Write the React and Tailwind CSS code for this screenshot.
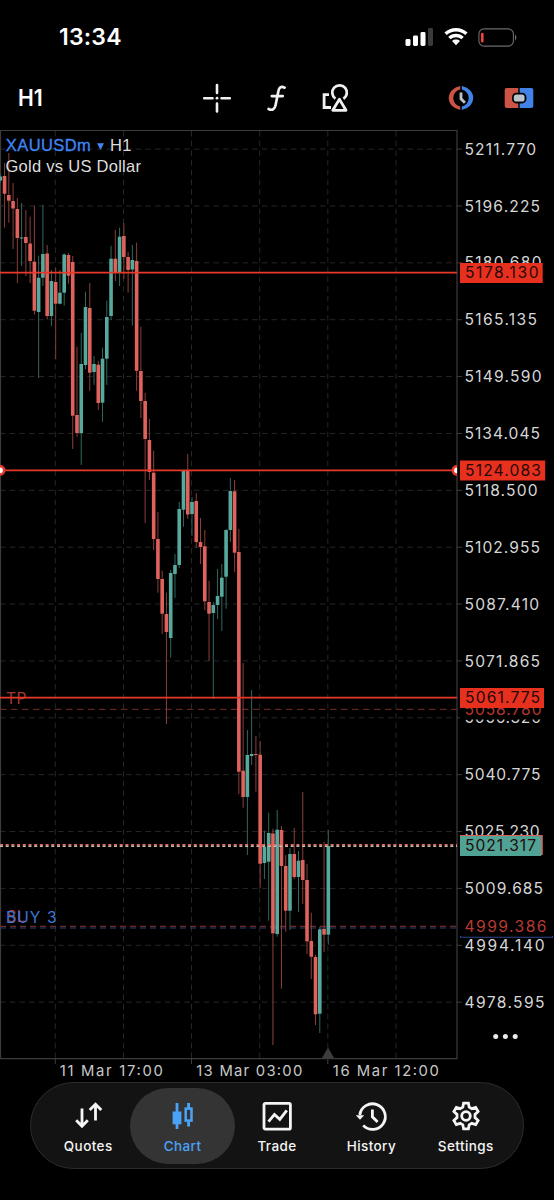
import React from 'react';

// [top, bottom, high, low, direction] in chart pixels
const CANDLES = [
  [176.5, 180.5, 174, 183, 'u'], [176, 193.7, 163, 227.7, 'd'], [195, 200.7, 153, 222.7, 'd'],
  [201, 208.5, 183, 249, 'd'], [209, 238, 198, 283, 'd'], [237.5, 238.5, 203, 266, 'u'],
  [237, 243, 210, 276, 'd'], [243.5, 261, 216.7, 283, 'd'], [261.7, 310.7, 205.5, 314.7, 'd'],
  [277.7, 312, 255.7, 378, 'u'], [254, 277.7, 205, 286, 'u'], [253.5, 316, 245, 319.5, 'd'],
  [281, 316, 270, 326, 'u'], [282, 303.7, 268, 359, 'd'], [292.7, 303.7, 270, 304.5, 'u'],
  [254.5, 292.7, 253.5, 305.6, 'u'], [255, 275.7, 253, 283.7, 'd'], [262, 415.7, 256, 449, 'd'],
  [415, 433, 346.7, 436.7, 'd'], [364, 433, 333, 465, 'u'], [307, 365, 291.7, 369, 'u'],
  [308, 372.7, 283, 390.7, 'd'], [364, 372, 356, 384.7, 'u'], [364.7, 403, 360.7, 410, 'd'],
  [358.7, 402.7, 347.7, 421.7, 'u'], [317, 358.7, 300.7, 385, 'u'], [258.7, 316, 245.7, 320, 'u'],
  [258.7, 272, 230, 281, 'd'], [236.7, 272, 227.7, 286, 'u'], [236, 257, 223, 279, 'd'],
  [257, 270, 251.7, 292.7, 'd'], [260, 269.5, 245, 325.7, 'u'], [261, 370.8, 242.5, 390.7, 'd'],
  [371, 401, 326.7, 418, 'd'], [401, 439, 393, 523, 'd'], [440, 472, 419, 480, 'd'],
  [472.7, 539, 450.7, 550, 'd'], [539, 579, 512, 592.7, 'd'], [579, 613.7, 570.7, 634, 'd'],
  [614, 632, 592.7, 724, 'd'], [573, 638, 570, 657.7, 'u'], [565, 574, 554, 598, 'u'],
  [509, 565, 502, 568, 'u'], [470.7, 509.7, 470, 526.7, 'u'], [470.7, 514.5, 454, 519, 'd'],
  [502, 514, 497, 536, 'u'], [501, 542, 493, 547.7, 'd'], [542, 547, 518, 564, 'd'],
  [546.3, 601.3, 530, 610, 'd'], [602, 613.7, 580.7, 661, 'd'], [605, 613, 602, 699, 'u'],
  [596, 605, 569, 619, 'u'], [577.7, 596.7, 564, 631, 'u'], [530, 576.7, 529, 608.7, 'u'],
  [491, 530, 478, 542, 'u'], [491.3, 552.7, 480, 572, 'd'], [552, 771.7, 529, 794, 'd'],
  [770.7, 797, 663, 807.7, 'd'], [755, 797, 730, 855, 'u'], [754, 756, 690, 765, 'u'],
  [754, 755, 736, 791.7, 'd'], [754.7, 863.7, 741, 888, 'd'], [847, 863, 830.5, 879, 'u'],
  [833, 861.7, 812.7, 920.7, 'u'], [833.5, 933.3, 828.7, 1045, 'd'], [829.7, 934, 810, 936.7, 'u'],
  [830, 866, 826, 988.7, 'd'], [866, 910.7, 855, 931.7, 'd'], [854, 910.7, 848, 930, 'u'],
  [854, 877, 828, 879, 'd'], [860.7, 877, 851, 912, 'u'], [860, 880, 792, 904, 'd'],
  [880, 941.3, 864, 954, 'd'], [941, 956.7, 912.7, 979, 'd'], [957, 1014.3, 954.7, 1025, 'd'],
  [929.3, 1013.7, 926.7, 1033, 'u'], [929, 934.7, 842, 952, 'd'], [846, 934.7, 830, 944.7, 'u'],
];

const PRICES = [
  ['5211.770', 71.5], ['5196.225', 75.5], ['5180.680', 77], ['5165.135', 72.5],
  ['5149.590', 77], ['5134.045', 75.5], ['5118.500', 73], ['5102.955', 75.5],
  ['5087.410', 74.5], ['5071.865', 75.5], ['5056.320', 76.5], ['5040.775', 76],
  ['5025.230', 75], ['5009.685', 78.5], ['4994.140', 80], ['4978.595', 80],
];

const DATES = [
  ['11 Mar 17:00', 60, 103], ['13 Mar 03:00', 196.5, 106], ['16 Mar 12:00', 333, 106],
];

const GRID_X = [55.3, 123.5, 191.5, 259.7, 327.8, 396];
const gridY = (i) => 149.1 + i * 56.87;

const Label = ({ x, y, w, children, size = 15.6, fill = '#d6d6d6' }) => (
  <text x={x} y={y} fontSize={size} fill={fill} textLength={w} lengthAdjust="spacing">{children}</text>
);

const Tag = ({ y, w, textW, fill, children }) => (
  <g>
    <rect x="460" y={y} width={w} height="20" fill={fill} />
    <Label x={465} y={y + 15.4} w={textW} fill="#250a07">{children}</Label>
  </g>
);

const StatusBar = () => (
  <div className="flex h-[72px] items-center pr-[37px] pl-[59px] pt-[2px]">
    <span className="pt-[1px] text-[23px] leading-none font-semibold tracking-[0.2px]">13:34</span>
    <div className="ml-auto flex items-center gap-[10px]">
      <svg width="29" height="18" viewBox="0 0 29 18">
        <rect x="0.5" y="11" width="5" height="7" rx="1.4" fill="#fff" />
        <rect x="8" y="7.5" width="5" height="10.5" rx="1.4" fill="#fff" />
        <rect x="15.5" y="4" width="5" height="14" rx="1.4" fill="#fff" />
        <rect x="23" y="0" width="5" height="18" rx="1.4" fill="#3a3a3a" />
      </svg>
      <svg width="24" height="18" viewBox="0 0 24 18" fill="#fff">
        <path d="M12 0C16.5 0 20.6 1.7 23.6 4.6L21.2 7.1C18.8 4.8 15.6 3.5 12 3.5S5.2 4.8 2.8 7.1L.4 4.6C3.4 1.7 7.5 0 12 0Z" />
        <path d="M12 5.8C15 5.8 17.7 6.9 19.8 8.9L17.3 11.3C15.9 10 14 9.2 12 9.2S8.1 10 6.7 11.3L4.2 8.9C6.3 6.9 9 5.8 12 5.8Z" />
        <path d="M12 11.5C13.5 11.5 14.8 12 15.9 12.9L12 17.2 8.1 12.9C9.2 12 10.5 11.5 12 11.5Z" />
      </svg>
      <svg width="39" height="19" viewBox="0 0 39 19">
        <rect x="0.9" y="0.9" width="34.5" height="17.2" rx="5.2" fill="none" stroke="#6b6b6b" strokeWidth="1.1" />
        <rect x="3" y="4.7" width="2.6" height="9.8" rx="1.2" fill="#f0443e" />
        <path d="M37 6.5C38.8 7.5 38.8 11.5 37 12.5Z" fill="#6b6b6b" />
      </svg>
    </div>
  </div>
);

const Toolbar = () => (
  <div className="flex h-[52px] items-center pr-[20px] pl-[18px]">
    <span className="w-[184px] text-[23px] leading-none font-semibold">
      <span className="inline-block origin-left scale-x-[0.92]">H1</span>
    </span>
    <svg width="30" height="30" viewBox="0 0 30 30" stroke="#f0f0f0" strokeWidth="2.6" strokeLinecap="round">
      <path d="M15 2V10M15 20.5V28.5M2.2 15.2H10.5M19.5 15.2H27.8" />
      <path d="M15 15.2h.01" strokeWidth="2.8" />
    </svg>
    <svg className="ml-[35px]" width="20" height="28" viewBox="0 0 20 28" fill="none" stroke="#f0f0f0" strokeWidth="2.7" strokeLinecap="round">
      <path d="M17.6 3.7C14 1.8 12 3.6 11.4 7L8.6 21C7.9 24.6 5.6 27 1.6 25M4.8 12.1H15.8" />
    </svg>
    <svg className="ml-[34px]" width="30" height="30" viewBox="0 0 30 30" fill="none" stroke="#f0f0f0" strokeWidth="2.8">
      <path d="M8 11.6H3.1V24.5H10" />
      <path d="M14.4 15.6A7.3 7.3 0 1 1 22.4 15.8" />
      <path d="M18.4 16.3L25 27.3H11.8Z" strokeLinejoin="round" />
    </svg>
    <svg className="ml-auto" width="30" height="26" viewBox="0 0 30 26">
      <path d="M14.2 1A14 12.2 0 0 0 14.2 25V21.6A8.8 8.8 0 0 1 14.2 4.4Z" fill="#cb5447" />
      <path d="M15.8 1A14 12.2 0 0 1 15.8 25V21.6A8.8 8.8 0 0 0 15.8 4.4Z" fill="#4281e6" />
      <path d="M15 7.4V13.8L18.9 17.7" fill="none" stroke="#b9c5cb" strokeWidth="2.8" />
    </svg>
    <svg className="ml-[28px]" width="30" height="22" viewBox="0 0 30 22">
      <path d="M2.7 1H14.3V21H2.7A2 2 0 0 1 .7 19V3A2 2 0 0 1 2.7 1Z" fill="#cb5447" />
      <path d="M15.7 1H27.3A2 2 0 0 1 29.3 3V19A2 2 0 0 1 27.3 21H15.7Z" fill="#4281e6" />
      <rect x="8.9" y="6.7" width="12.6" height="8.8" rx="3.5" fill="#b9c5cb" stroke="#000" strokeWidth="1.8" />
    </svg>
  </div>
);

const Chart = () => (
  <svg className="block" width="554" height="958" viewBox="0 124 554 958">
    {/* grid */}
    <g stroke="#262626" strokeWidth="1" strokeDasharray="5.5 4.2">
      {PRICES.map(([p], i) => <path key={p} d={`M0 ${gridY(i)}H457`} />)}
      {GRID_X.map((x) => <path key={x} d={`M${x} 131V1058`} />)}
    </g>
    <path d="M457 130.5H.5V1058.7H457Z" fill="none" stroke="#3c3c3c" strokeWidth="1.2" />
    <g stroke="#3c3c3c" strokeWidth="1">
      {PRICES.map(([p], i) => <path key={p} d={`M457 ${gridY(i)}H462`} />)}
      {[55.3, 191.5, 327.8].map((x) => <path key={x} d={`M${x} 1059V1064`} />)}
    </g>

    {/* pending and open position levels */}
    <path d="M0 709.3H457" stroke="#7a2e28" strokeDasharray="6.5 4.5" />
    <path d="M0 926.4H457" stroke="#6e2a2c" strokeWidth="1.2" strokeDasharray="6 4" />
    <path d="M0 928H457" stroke="#2c3f6d" strokeWidth="1.2" strokeDasharray="6 4" />
    <Label x={6} y={704} w={20.5} size={15.5} fill="#a53a30">TP</Label>
    <Label x={6.5} y={921.5} w={19} size={15.5} fill="#b2392f">SL</Label>
    <Label x={6} y={923} w={50.5} size={15.5} fill="#3c78dc">BUY 3</Label>

    {/* candles */}
    {CANDLES.map(([top, bottom, high, low, dir], i) => {
      const x = 0.3 + i * 4.26;
      const up = dir === 'u';
      return (
        <g key={i}>
          <rect x={x - 0.5} y={high} width="1" height={low - high} fill={up ? '#31675f' : '#8b3f3b'} />
          <rect x={x - 1.8} y={top} width="3.6" height={bottom - top} fill={up ? '#57a99d' : '#e0625c'} />
        </g>
      );
    })}

    <path d="M0 844.9H457" stroke="#dc6a66" strokeWidth="1.6" strokeDasharray="3 2.7" />
    <path d="M0 846.2H457" stroke="#c9b9ab" strokeWidth="1.4" strokeDasharray="3 2.7" />
    <path d="M0 272.6H457M0 470.3H457M0 697.6H457" stroke="#e8382a" strokeWidth="1.7" />
    <path d="M0 464.8A5.5 5.5 0 0 1 0 475.8ZM457 464.8A5.5 5.5 0 0 0 457 475.8Z" fill="#e8382a" />
    <path d="M0 467.4A2.9 2.9 0 0 1 0 473.2ZM457 467.4A2.9 2.9 0 0 0 457 473.2Z" fill="#fff" />
    <path d="M328 1047.5L334.7 1059H321.3Z" fill="#3c3c3c" />

    {/* symbol caption */}
    <g fontFamily="'Liberation Sans', sans-serif">
      <g stroke="#3f86f5" strokeWidth="0.3">
        <Label x={5.8} y={151} w={85} size={16.5} fill="#3f86f5">XAUUSDm</Label>
      </g>
      <path d="M97 143.2H104L100.5 150Z" fill="#3f86f5" />
      <Label x={110} y={151} w={21.5} size={16.5} fill="#dedede">H1</Label>
      <Label x={5.5} y={171.8} w={135.5} size={16.5} fill="#dedede">Gold vs US Dollar</Label>
    </g>

    {/* price axis */}
    {PRICES.map(([p, w], i) => <Label key={p} x={464.5} y={gridY(i) + 5.6} w={w}>{p}</Label>)}
    <rect x="460" y="700" width="84" height="19.5" fill="#000" />
    <Label x={464.5} y={714.8} w={77} fill="#b5362c">5058.780</Label>
    <Tag y={263} w={82.7} textW={73.5} fill="#e8301f">5178.130</Tag>
    <Tag y={460.5} w={85.2} textW={76} fill="#e8301f">5124.083</Tag>
    <Tag y={688} w={84} textW={75} fill="#e8301f">5061.775</Tag>
    <rect x="460" y="835" width="82.8" height="20" fill="#d9605a" />
    <Tag y={836} w={81.3} textW={71} fill="#50a295">5021.317</Tag>
    <Label x={464.5} y={931.8} w={82} fill="#b63a31">4999.386</Label>
    <path d="M460.5 936V937.3H552.5V936" fill="none" stroke="#2c4a8c" strokeWidth="1.1" />
    <g fill="#ececec">
      <circle cx="495.7" cy="1036.4" r="2.5" />
      <circle cx="505.4" cy="1036.4" r="2.5" />
      <circle cx="515.2" cy="1036.4" r="2.5" />
    </g>

    {DATES.map(([d, x, w]) => <Label key={d} x={x - 0.2} y={1076.4} w={w} size={14.8} fill="#c8c8c8">{d}</Label>)}
  </svg>
);

const TABS = [
  {
    name: 'Quotes',
    icon: <path d="M9 7.5V24.5M3.2 19.3L9 25.2L14.8 19.3M22.5 19.5V3.5M16.7 9L22.5 3.2L28.3 9" />,
  },
  {
    name: 'Chart',
    active: true,
    icon: (
      <>
        <path d="M9 2V28" strokeWidth="2.8" />
        <rect x="4.6" y="10.5" width="8.8" height="12.8" fill="currentColor" stroke="none" />
        <path d="M20.6 2V7M20.6 20.5V25.5" strokeWidth="2.8" />
        <rect x="17.7" y="7.6" width="5.8" height="12" strokeWidth="2.5" />
      </>
    ),
  },
  {
    name: 'Trade',
    icon: (
      <>
        <rect x="2" y="2.3" width="26.4" height="25.8" rx="1.4" />
        <path d="M6.5 20.6L12.4 13.5L17.8 18.4L24.8 9.3" />
      </>
    ),
  },
  {
    name: 'History',
    icon: (
      <>
        <path d="M3.8 14A12.8 12.8 0 1 1 7.2 24.4" />
        <path d="M-.2 14.2H8.2L4 18.8Z" fill="currentColor" stroke="none" />
        <path d="M16.4 8.4V15.8L21.6 21" />
      </>
    ),
  },
  {
    name: 'Settings',
    icon: (
      <>
        <path d="M12.6 2.2H17.4L18.2 6.2L20.8 7.7L24.7 6.4L27.1 10.5L24 13.4V16.6L27.1 19.5L24.7 23.6L20.8 22.3L18.2 23.8L17.4 27.8H12.6L11.8 23.8L9.2 22.3L5.3 23.6L2.9 19.5L6 16.6V13.4L2.9 10.5L5.3 6.4L9.2 7.7L11.8 6.2Z" />
        <circle cx="15" cy="15" r="4.3" />
      </>
    ),
  },
];

const TabBar = () => (
  <nav className="mx-[30px] flex h-[87px] justify-center rounded-full border border-[#2c2c2c] bg-[#131313] pt-[5px]">
    {TABS.map(({ name, icon, active }) => (
      <div key={name} className="flex w-[94.4px] shrink-0 justify-center">
        <button
          className={
            active
              ? 'flex h-[76px] w-[105px] shrink-0 flex-col items-center rounded-[38px] bg-[#343434] pt-[13px] text-[#4ba3f8]'
              : 'flex h-[76px] w-[94px] shrink-0 flex-col items-center pt-[13px] text-[#f5f5f5]'
          }
        >
          <svg className="overflow-visible" width="30" height="30" viewBox="0 0 30 30" fill="none" stroke="currentColor" strokeWidth="2.8">
            {icon}
          </svg>
          <span className="mt-[7px] text-[13.5px] leading-[17px] font-medium tracking-[0.4px]">{name}</span>
        </button>
      </div>
    ))}
  </nav>
);

export default function App() {
  return (
    <div className="h-[1200px] w-[554px] overflow-hidden bg-black font-['Inter',sans-serif] text-white">
      <StatusBar />
      <Toolbar />
      <Chart />
      <TabBar />
    </div>
  );
}
